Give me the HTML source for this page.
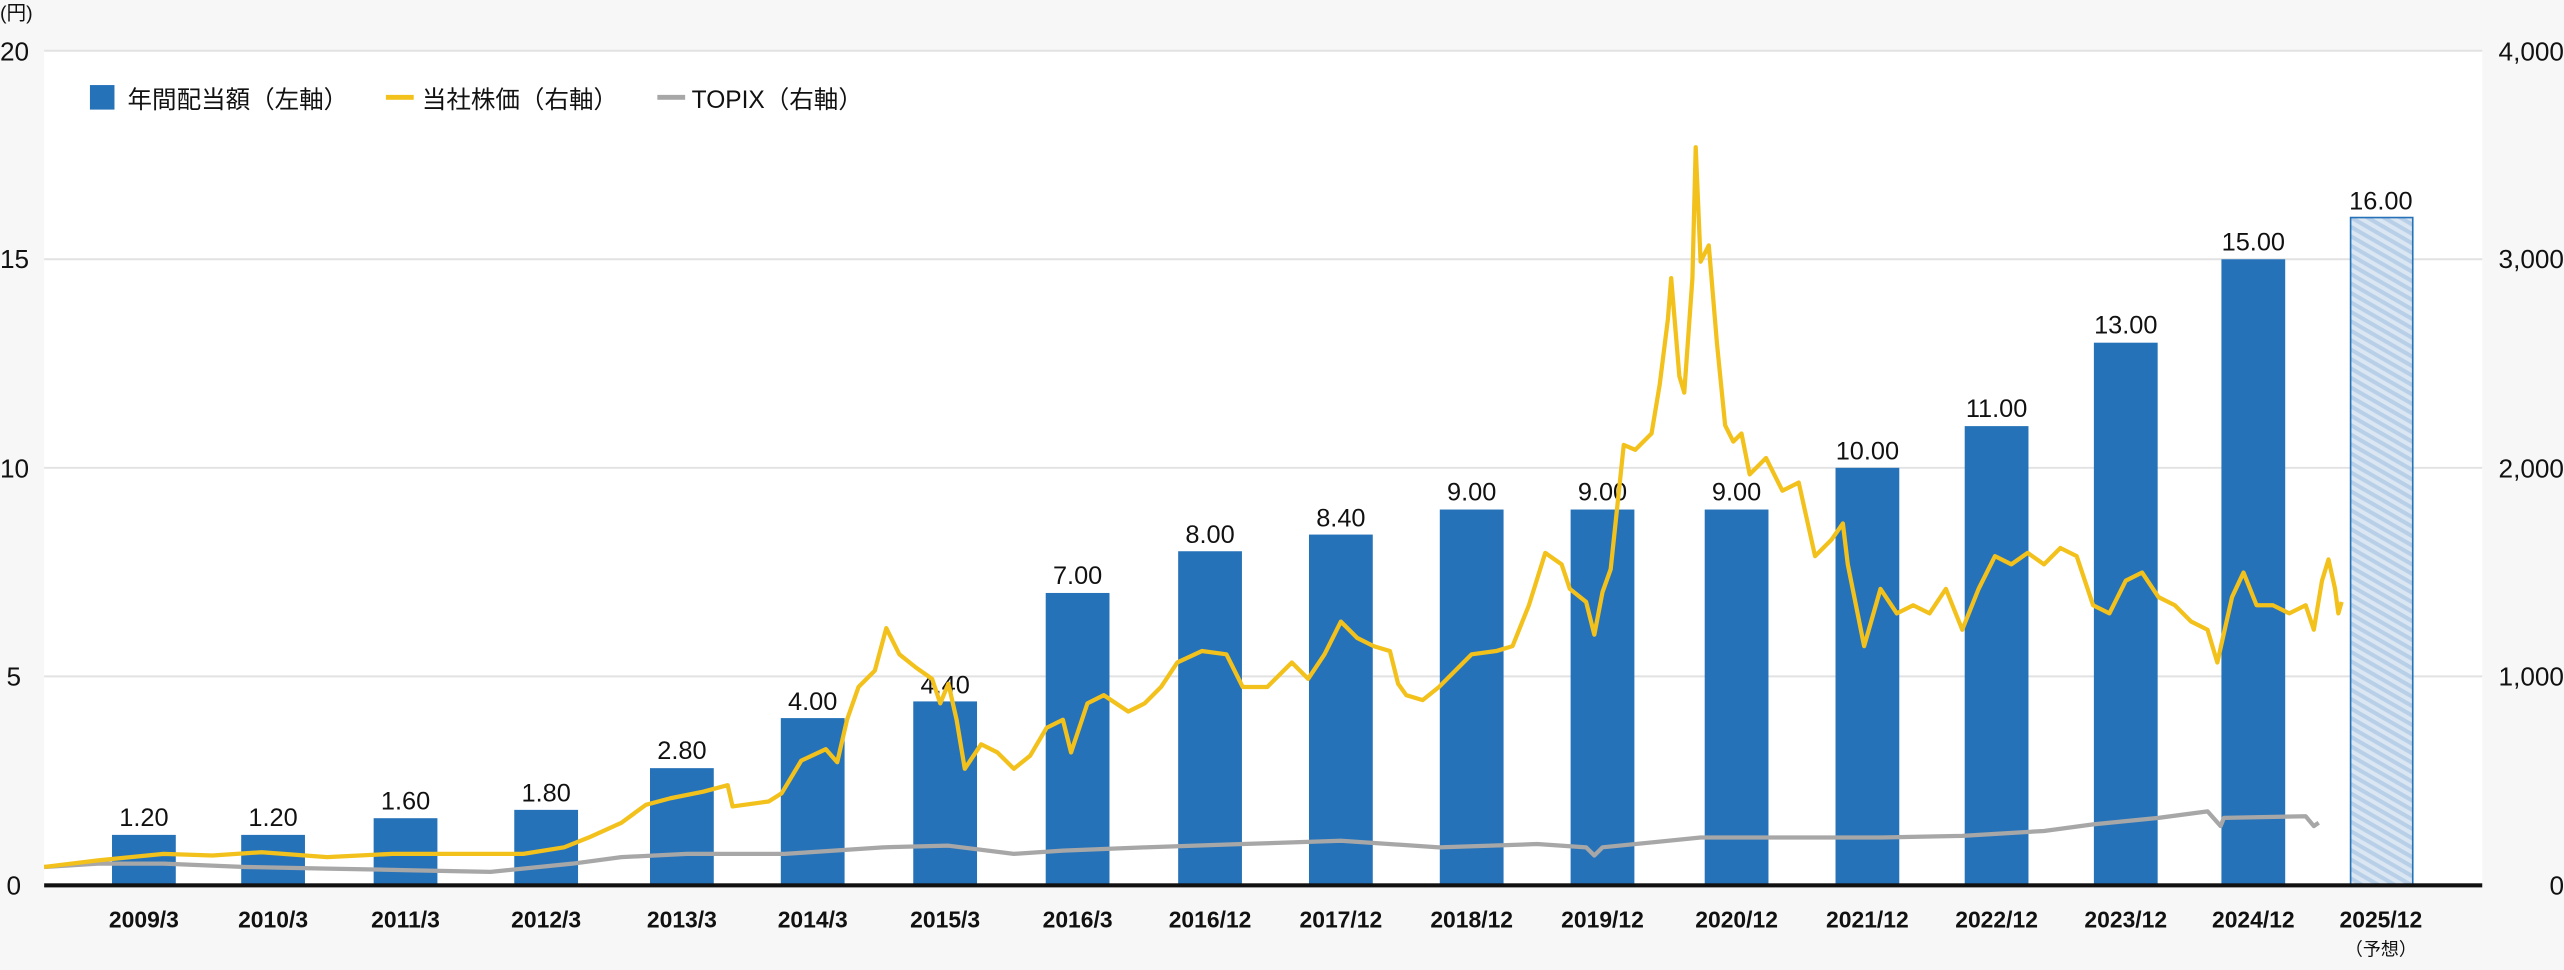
<!DOCTYPE html>
<html><head><meta charset="utf-8"><style>
html,body{margin:0;padding:0;background:#f7f7f7;}
svg{display:block;}
text{font-family:"Liberation Sans","Noto Sans CJK JP",sans-serif;fill:#111;}
</style></head><body>
<svg width="2564" height="970" viewBox="0 0 1568 593" preserveAspectRatio="none" xmlns="http://www.w3.org/2000/svg">
<defs>
<pattern id="h" patternUnits="userSpaceOnUse" width="5" height="5" patternTransform="rotate(30)">
<rect width="5" height="5" fill="#dbe6f3"/><rect width="5" height="2.5" fill="#b8cfe8"/>
</pattern>
</defs>
<rect x="0" y="0" width="1568" height="593" fill="#f7f7f7"/>
<rect x="27" y="31" width="1491" height="510" fill="#fff"/>
<g stroke="#e2e2e2" stroke-width="1.2">
<line x1="27" x2="1518" y1="31" y2="31"/><line x1="27" x2="1518" y1="158.5" y2="158.5"/>
<line x1="27" x2="1518" y1="286" y2="286"/><line x1="27" x2="1518" y1="413.5" y2="413.5"/>
</g>
<text x="0" y="12" font-size="12">(円)</text>
<g font-size="16">
<text x="0" y="37">20</text><text x="0" y="164">15</text><text x="0" y="292">10</text><text x="4" y="419">5</text><text x="4" y="547">0</text>
</g>
<g font-size="16" text-anchor="end">
<text x="1568" y="37">4,000</text><text x="1568" y="164">3,000</text><text x="1568" y="292">2,000</text><text x="1568" y="419">1,000</text><text x="1568" y="547">0</text>
</g>
<rect x="55" y="52" width="15" height="15" fill="#2672b8"/>
<text x="78" y="66" font-size="15">年間配当額（左軸）</text>
<rect x="236" y="58" width="17" height="3" fill="#f3c11c"/>
<text x="258" y="66" font-size="15">当社株価（右軸）</text>
<rect x="402" y="58" width="17" height="3" fill="#a7a7a7"/>
<text x="423" y="66" font-size="15">TOPIX（右軸）</text>
<g fill="#2672b8">
<rect x="68.5" y="510.4" width="39" height="30.6"/>
<rect x="147.5" y="510.4" width="39" height="30.6"/>
<rect x="228.5" y="500.2" width="39" height="40.8"/>
<rect x="314.5" y="495.1" width="39" height="45.9"/>
<rect x="397.5" y="469.6" width="39" height="71.4"/>
<rect x="477.5" y="439" width="39" height="102"/>
<rect x="558.5" y="428.8" width="39" height="112.2"/>
<rect x="639.5" y="362.5" width="39" height="178.5"/>
<rect x="720.5" y="337" width="39" height="204"/>
<rect x="800.5" y="326.8" width="39" height="214.2"/>
<rect x="880.5" y="311.5" width="39" height="229.5"/>
<rect x="960.5" y="311.5" width="39" height="229.5"/>
<rect x="1042.5" y="311.5" width="39" height="229.5"/>
<rect x="1122.5" y="286" width="39" height="255"/>
<rect x="1201.5" y="260.5" width="39" height="280.5"/>
<rect x="1280.5" y="209.5" width="39" height="331.5"/>
<rect x="1358.5" y="158.5" width="39" height="382.5"/>
</g>
<rect x="1437.5" y="133" width="38" height="408" fill="url(#h)" stroke="#2672b8" stroke-width="1"/>
<g font-size="15.5" text-anchor="middle">
<text x="88" y="505">1.20</text><text x="167" y="505">1.20</text><text x="248" y="495">1.60</text>
<text x="334" y="490">1.80</text><text x="417" y="464">2.80</text><text x="497" y="434">4.00</text>
<text x="578" y="424">4.40</text><text x="659" y="357">7.00</text><text x="740" y="332">8.00</text>
<text x="820" y="322">8.40</text><text x="900" y="306">9.00</text><text x="980" y="306">9.00</text>
<text x="1062" y="306">9.00</text><text x="1142" y="281">10.00</text><text x="1221" y="255">11.00</text>
<text x="1300" y="204">13.00</text><text x="1378" y="153">15.00</text><text x="1456" y="128">16.00</text>
</g>
<polyline fill="none" stroke="#a7a7a7" stroke-width="2.6" stroke-linejoin="round" points="27,530 60,528 100,528 150,530 200,531 250,532 300,533 350,528 380,524 420,522 480,522 540,518 580,517 620,522 650,520 700,518 760,516 820,514 880,518 940,516 970,518 975,523 980,518 1040,512 1100,512 1150,512 1200,511 1250,508 1280,504 1320,500 1350,496 1358,505 1360,500 1410,499 1415,505 1418,503"/>
<polyline fill="none" stroke="#f3c11c" stroke-width="2.6" stroke-linejoin="round" points="27,530 60,526 100,522 130,523 160,521 200,524 240,522 280,522 320,522 345,518 360,512 380,503 395,492 410,488 430,484 445,480 448,493 470,490 478,485 490,465 505,458 512,466 518,440 525,420 535,410 542,384 550,400 560,408 570,415 575,430 580,418 585,440 590,470 600,455 610,460 620,470 630,462 640,445 650,440 655,460 665,430 675,425 690,435 700,430 710,420 720,405 735,398 750,400 760,420 775,420 790,405 800,415 810,400 820,380 830,390 840,395 850,398 855,418 860,425 870,428 880,420 890,410 900,400 915,398 925,395 935,370 945,338 955,345 960,360 970,368 975,388 980,362 985,348 993,272 1000,275 1010,265 1015,235 1020,195 1022,170 1027,230 1030,240 1035,170 1037,90 1040,160 1045,150 1050,210 1055,260 1060,270 1065,265 1070,290 1080,280 1090,300 1100,295 1110,340 1120,330 1127,320 1130,345 1140,395 1150,360 1160,375 1170,370 1180,375 1190,360 1200,385 1210,360 1220,340 1230,345 1240,338 1250,345 1260,335 1270,340 1280,370 1290,375 1300,355 1310,350 1320,365 1330,370 1340,380 1350,385 1356,405 1365,365 1372,350 1380,370 1390,370 1400,375 1410,370 1415,385 1420,355 1424,342 1428,360 1430,375 1432,368"/>
<rect x="27" y="540" width="1491" height="2.5" fill="#111"/>
<g font-size="14" font-weight="bold" text-anchor="middle">
<text x="88" y="567">2009/3</text><text x="167" y="567">2010/3</text><text x="248" y="567">2011/3</text>
<text x="334" y="567">2012/3</text><text x="417" y="567">2013/3</text><text x="497" y="567">2014/3</text>
<text x="578" y="567">2015/3</text><text x="659" y="567">2016/3</text><text x="740" y="567">2016/12</text>
<text x="820" y="567">2017/12</text><text x="900" y="567">2018/12</text><text x="980" y="567">2019/12</text>
<text x="1062" y="567">2020/12</text><text x="1142" y="567">2021/12</text><text x="1221" y="567">2022/12</text>
<text x="1300" y="567">2023/12</text><text x="1378" y="567">2024/12</text><text x="1456" y="567">2025/12</text>
</g>
<text x="1456" y="584" font-size="11" text-anchor="middle">（予想）</text>
</svg>
</body></html>
